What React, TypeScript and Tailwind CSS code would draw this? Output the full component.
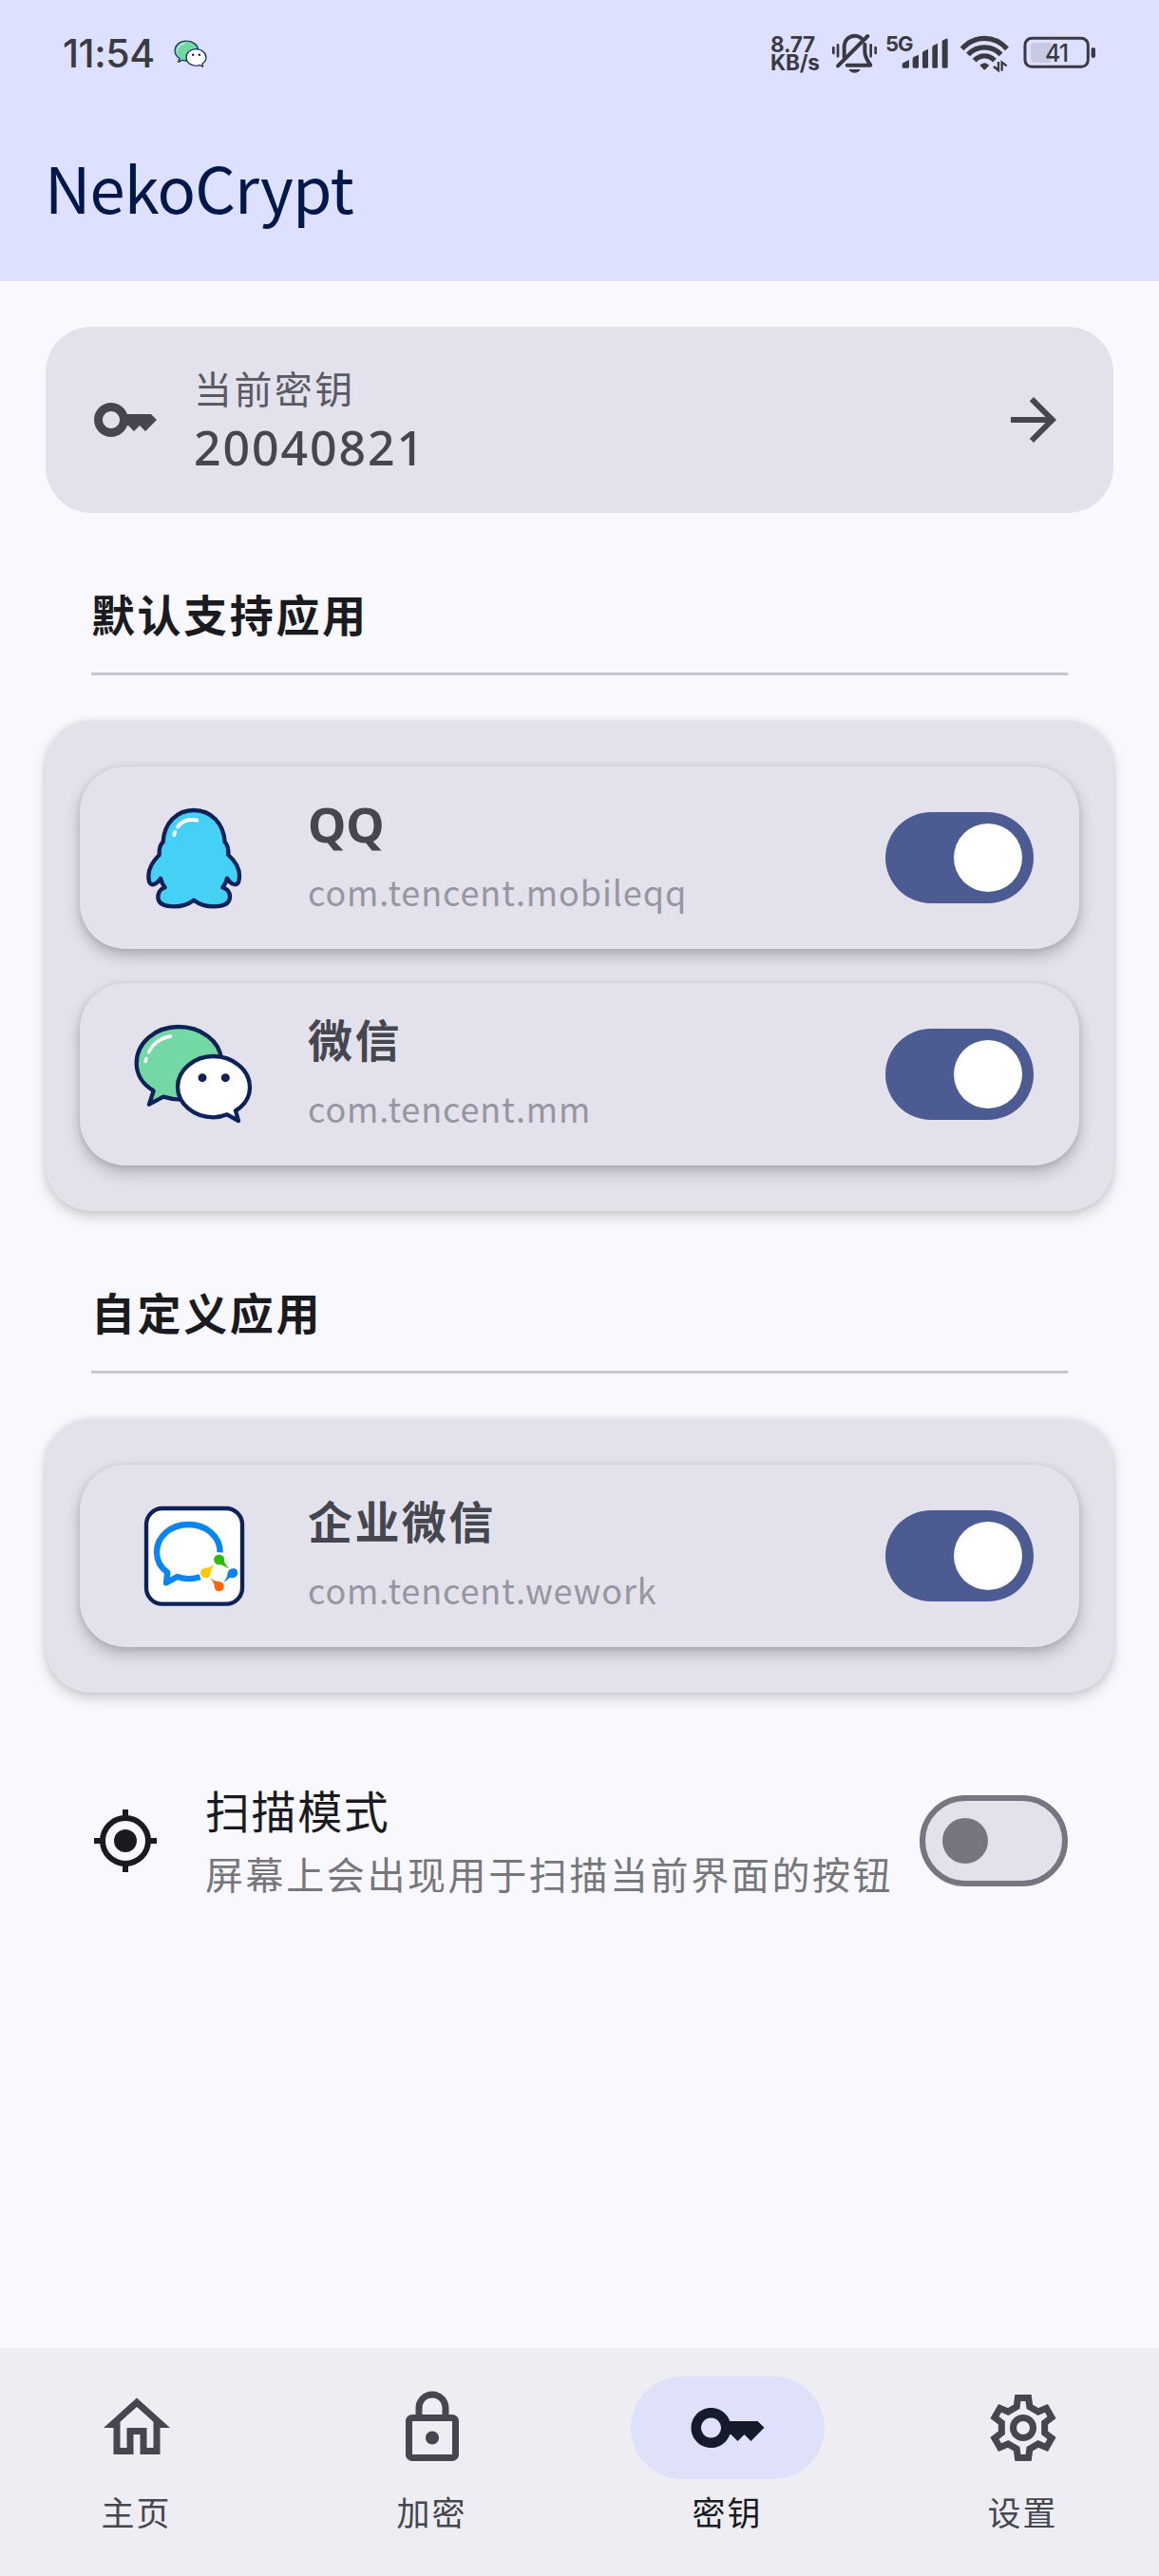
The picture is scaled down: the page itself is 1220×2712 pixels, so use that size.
import type { ReactNode } from "react";

const latin = "font-['Noto_Sans','Noto_Sans_CJK_SC',sans-serif]";
const digits = "font-['Inter','Noto_Sans_CJK_SC',sans-serif]";
const cjk = "font-['Noto_Sans_CJK_SC',sans-serif]";

const KEY_PATH =
  "M21 10h-8.35C11.83 7.67 9.61 6 7 6c-3.31 0-6 2.69-6 6s2.69 6 6 6c2.61 0 4.83-1.67 5.65-4H13l2 2 2-2 2 2 4-4.04L21 10zM7 15c-1.65 0-3-1.35-3-3s1.35-3 3-3 3 1.35 3 3-1.35 3-3 3z";
const HOME_PATH =
  "M12 5.69l5 4.5V18h-2v-6H9v6H7v-7.81l5-4.5M12 3L2 12h3v8h6v-6h2v6h6v-8h3L12 3z";
const LOCK_PATH =
  "M18 8h-1V6c0-2.76-2.24-5-5-5S7 3.24 7 6v2H6c-1.1 0-2 .9-2 2v10c0 1.1.9 2 2 2h12c1.1 0 2-.9 2-2V10c0-1.1-.9-2-2-2zM9 6c0-1.66 1.34-3 3-3s3 1.34 3 3v2H9V6zm9 14H6V10h12v10zm-6-3c1.1 0 2-.9 2-2s-.9-2-2-2-2 .9-2 2 .9 2 2 2z";

function WeChatShapes() {
  return (
    <g stroke="#0f2257" strokeWidth="13" strokeLinejoin="round" strokeLinecap="round">
      <path
        fill="#74d8a5"
        d="M95 925C60 905 41 873 41 838C41 773 101 723 174 723C243 723 304 766 309 826L309 900L180 953C160 953 145 950 126 944L81 968Z"
      />
      <path
        fill="#fff"
        d="M284 816C346 816 399 860 399 914C399 946 383 970 354 988L363 1020L327 1000C313 1006 299 1009 284 1009C222 1009 171 966 171 913C171 860 222 816 284 816Z"
      />
      <circle cx="249" cy="884" r="13.5" fill="#0f2257" stroke="none" />
      <circle cx="322" cy="884" r="13.5" fill="#0f2257" stroke="none" />
      <path fill="none" stroke="#fff" strokeWidth="10" d="M80 803C93 776 117 758 149 753M72 823L69 833" />
    </g>
  );
}

function QQIcon() {
  return (
    <svg viewBox="6 -27 432 432" className="h-36 w-36 shrink-0">
      <path
        fill="#45d0f6"
        stroke="#0f2257"
        strokeWidth="13"
        strokeLinejoin="round"
        d="M222 39C166 39 128 82 125 139C114 150 112 164 113 180C90 203 79 222 79 246C79 272 88 278 100 271C110 268 112 261 117 254C120 268 125 276 131 283C115 287 109 301 109 313C109 332 126 343 160 343C188 343 206 335 222 323C238 335 256 343 284 343C319 343 336 332 336 312C336 298 328 287 313 283C319 276 324 268 327 254C332 261 335 268 344 271C358 278 366 270 366 245C366 222 355 202 331 180C332 164 330 150 320 139C316 82 278 39 222 39Z"
      />
      <path fill="none" stroke="#fff" strokeWidth="12" strokeLinecap="round" d="M171 92C184 73 205 65 232 71M162 108L160 117" />
    </svg>
  );
}

function WeChatIcon() {
  return (
    <svg viewBox="6 657 432 432" className="h-36 w-36 shrink-0">
      <WeChatShapes />
    </svg>
  );
}

function WeComIcon() {
  return (
    <svg viewBox="-24 -27 432 432" className="h-36 w-36 shrink-0">
      <rect x="42" y="39" width="303" height="302" rx="51" fill="#fff" stroke="#0f2257" strokeWidth="13" />
      <path
        fill="none"
        stroke="#0a85ee"
        strokeWidth="19"
        strokeLinejoin="round"
        d="M275 178C276 129 232 90 175 90C119 90 75 128 75 178C75 205 87 226 109 242L105 274L140 255C160 262 188 263 212 256"
      />
      <path fill="#2fbb08" d="M258 209C251 194 261 185 272 185C285 185 291 196 288 207C292 217 301 225 303 230C294 224 285 219 276 217C268 218 262 216 258 209Z" />
      <path fill="#0a82ee" d="M320 229C332 232 333 246 327 253C322 259 313 260 307 257C299 262 291 270 285 273C291 264 297 258 298 248C299 235 308 226 320 229Z" />
      <path fill="#fd6500" d="M243 257C251 265 260 269 270 270C283 271 290 281 286 291C282 302 267 305 260 295C256 289 258 283 256 279C253 270 248 264 243 257Z" />
      <path fill="#fdcb04" d="M259 213C251 222 247 231 245 242C244 254 236 260 227 259C216 257 210 245 216 235C221 226 231 228 239 226C247 222 253 218 259 213Z" />
    </svg>
  );
}

function StatusIcons() {
  return (
    <svg viewBox="255 96 850 144" className="h-12 w-[283.3px] shrink-0" fill="none" stroke="#393a44">
      <g strokeWidth="10" strokeLinecap="round">
        <path d="M265 150V168M279 142V178M383 142V178M398 150V168" strokeWidth="8" />
        <path d="M299 180V150C299 126 314 113 332 113C341 113 349 117 354 122" strokeWidth="12" />
        <path d="M364 140V163C364 181 373 193 382 206H308" strokeLinejoin="round" strokeWidth="12" />
        <path d="M279 208L373 114" strokeWidth="12" />
      </g>
      <path d="M313 219H350C346 227 340 230 332 230S317 227 313 219Z" fill="#393a44" stroke="none" />
      <g fill="#393a44" stroke="none">
        <path d="M482 204Q482 200 486 198L504 189V211Q504 215 500 215H486Q482 215 482 211Z" />
        <path d="M515 186Q515 182 518 180L534 173V211Q534 215 530 215H519Q515 215 515 211Z" />
        <path d="M546 168Q546 164 549 162L564 155V211Q564 215 560 215H550Q546 215 546 211Z" />
        <path d="M577 150Q577 146 580 144L594 137V211Q594 215 590 215H581Q577 215 577 211Z" />
        <path d="M608 132Q608 128 611 127L622 122Q626 121 626 125V211Q626 215 622 215H612Q608 215 608 211Z" />
      </g>
      <g strokeWidth="16">
        <path d="M671 154C711 110 773 110 813 154" />
        <path d="M690 172C719 142 765 142 794 172" />
        <path d="M710 191C728 172 756 172 774 191" />
      </g>
      <path d="M727 206Q742 191 757 206L745 219Q742 222 739 219Z" fill="#393a44" stroke="none" />
      <path d="M786 195V222L771 210M797 224V197L812 208" strokeWidth="7" />
      <rect x="870" y="121" width="199" height="90" rx="21" strokeWidth="9" />
      <path d="M902 135H953V198H902Q888 198 888 184V149Q888 135 902 135Z" fill="#c7c9e5" stroke="none" />
      <rect x="1079" y="150" width="13" height="33" rx="6" fill="#393a44" stroke="none" />
    </svg>
  );
}

function StatusBar() {
  return (
    <div className="flex h-[112px] items-center pl-[66px] text-[#393a44]">
      <span className={`${digits} w-[117px] text-[41px] font-medium leading-none tracking-[-0.4px]`}>11:54</span>
      <svg viewBox="30 712 380 316" className="h-[29px] w-[35px]">
        <WeChatShapes />
      </svg>
      <div className={`${digits} ml-[593px] w-[63px] whitespace-pre-line text-[22.5px] font-bold leading-[19px] tracking-[-0.2px]`}>
        {"8.77\nKB/s"}
      </div>
      <div className="relative h-12">
        <StatusIcons />
        <span className={`${digits} absolute left-[58px] top-[3px] text-[22px] font-bold leading-[22px] tracking-[-1px]`}>5G</span>
        <span className={`${digits} absolute left-[226px] top-[12px] text-[25px] font-medium leading-[25px] tracking-[-1px]`}>41</span>
      </div>
    </div>
  );
}

function Switch({ on }: { on: boolean }) {
  return on ? (
    <div className="flex h-24 w-[156px] shrink-0 items-center justify-end rounded-full bg-[#4c5b92] pr-3">
      <div className="h-[72px] w-[72px] rounded-full bg-white" />
    </div>
  ) : (
    <div className="flex h-24 w-[156px] shrink-0 items-center rounded-full border-[6px] border-[#777680] bg-[#e3e1ec] pl-[18px]">
      <div className="h-12 w-12 rounded-full bg-[#777680]" />
    </div>
  );
}

function SectionTitle({ children }: { children: ReactNode }) {
  return (
    <div className="px-12">
      <h2 className={`${cjk} text-[46px] font-bold leading-[66px] tracking-[2.6px] text-[#1a1b21]`}>{children}</h2>
      <div className="mt-[30px] h-[3px] bg-[#c6c5d0]" />
    </div>
  );
}

function AppGroup({ children }: { children: ReactNode }) {
  return (
    <div className="mt-12 flex flex-col gap-9 rounded-[48px] bg-[#e3e1ea] px-9 py-12 shadow-[0_6px_14px_rgba(0,0,0,0.17),0_0_7px_rgba(0,0,0,0.09)]">
      {children}
    </div>
  );
}

function AppRow({ icon, name, pkg }: { icon: ReactNode; name: string; pkg: string }) {
  return (
    <div className="flex h-48 items-center rounded-[48px] bg-[#e3e1ec] px-12 shadow-[0_8px_16px_rgba(0,0,0,0.21),0_1px_7px_rgba(0,0,0,0.1)]">
      {icon}
      <div className="ml-12 flex-1 pb-1">
        <div className={`${latin} h-[74px] text-[47px] font-bold leading-[65px] tracking-[2.4px] text-[#45464f]`}>
          {name === "QQ" ? <span className="text-[51px] tracking-[0px]">{name}</span> : name}
        </div>
        <div className={`${cjk} text-[36px] leading-[59px] tracking-[0.9px] text-[#9796a0]`}>{pkg}</div>
      </div>
      <Switch on />
    </div>
  );
}

function NavItem({ label, active, children }: { label: string; active?: boolean; children: ReactNode }) {
  return (
    <div className="flex flex-1 flex-col items-center">
      <div className={active ? "flex h-[108px] w-[204px] items-center justify-center rounded-full bg-[#dfe0fa] text-[#161b2c]" : "flex h-[108px] w-[204px] items-center justify-center text-[#45464f]"}>
        <svg viewBox="0 0 24 24" className="h-[84px] w-[84px]" fill="currentColor">
          {children}
        </svg>
      </div>
      <span className={active ? `${cjk} mt-2 text-[35px] leading-[52px] tracking-[2px] text-[#1a1b21]` : `${cjk} mt-2 text-[35px] leading-[52px] tracking-[2px] text-[#45464f]`}>
        {label}
      </span>
    </div>
  );
}

export default function App() {
  return (
    <div className="flex h-[2712px] w-[1220px] flex-col overflow-hidden bg-[#faf8ff]">
      <header className="h-[296px] bg-[#dde1ff]">
        <StatusBar />
        <h1 className={`${cjk} pl-[47px] pt-[37px] text-[67px] leading-[94px] tracking-[-0.9px] text-[#001849]`}>NekoCrypt</h1>
      </header>

      <main className="flex flex-1 flex-col px-12 pt-12">
        <section className="flex h-[196px] items-center rounded-[48px] bg-[#e3e1ec] px-12 text-[#45464f]">
          <svg viewBox="0 0 24 24" className="h-[72px] w-[72px]" fill="currentColor">
            <path d={KEY_PATH} />
          </svg>
          <div className="ml-9 flex-1">
            <div className={`${cjk} h-[61px] text-[40px] leading-[58px] tracking-[2.4px] text-[#5a5a64]`}>当前密钥</div>
            <div className={`${latin} h-[66px] text-[50px] font-medium leading-[63px] tracking-[1.9px]`}>20040821</div>
          </div>
          <svg viewBox="0 0 24 24" className="h-[72px] w-[72px]" fill="currentColor">
            <path d="M12 4l-1.41 1.41L16.17 11H4v2h12.17l-5.58 5.59L12 20l8-8z" />
          </svg>
        </section>

        <div className="mt-[72px]">
          <SectionTitle>默认支持应用</SectionTitle>
          <AppGroup>
            <AppRow icon={<QQIcon />} name="QQ" pkg="com.tencent.mobileqq" />
            <AppRow icon={<WeChatIcon />} name="微信" pkg="com.tencent.mm" />
          </AppGroup>
        </div>

        <div className="mt-[72px]">
          <SectionTitle>自定义应用</SectionTitle>
          <AppGroup>
            <AppRow icon={<WeComIcon />} name="企业微信" pkg="com.tencent.wework" />
          </AppGroup>
        </div>

        <section className="mt-[60px] flex h-48 items-center px-12">
          <svg viewBox="0 0 24 24" className="h-[72px] w-[72px] shrink-0" fill="none" stroke="#1a1b21" strokeWidth="2">
            <circle cx="12" cy="12" r="8" />
            <circle cx="12" cy="12" r="4" fill="#1a1b21" stroke="none" />
            <path d="M12 1v3M12 20v3M1 12h3M20 12h3" />
          </svg>
          <div className={`${cjk} ml-12 flex-1 whitespace-nowrap`}>
            <div className="h-[68px] text-[47px] leading-[62px] tracking-[1.6px] text-[#1a1b21]">扫描模式</div>
            <div className="text-[40px] leading-[60px] tracking-[2.6px] text-[#76767d]">屏幕上会出现用于扫描当前界面的按钮</div>
          </div>
          <Switch on={false} />
        </section>
      </main>

      <nav className="flex h-60 gap-6 bg-[#eeedf4] pt-[30px]">
        <NavItem label="主页">
          <path d={HOME_PATH} />
        </NavItem>
        <NavItem label="加密">
          <path d={LOCK_PATH} />
        </NavItem>
        <NavItem label="密钥" active>
          <path d={KEY_PATH} />
        </NavItem>
        <NavItem label="设置">
          <g fill="none" stroke="currentColor" strokeWidth="2">
            <path d="M10.4 3L13.6 3L13.95 5.65L16.52 7.14L18.99 6.11L20.59 8.89L18.47 10.51L18.47 13.49L20.59 15.11L18.99 17.89L16.52 16.86L13.95 18.35L13.6 21L10.4 21L10.05 18.35L7.48 16.86L5.01 17.89L3.41 15.11L5.53 13.49L5.53 10.51L3.41 8.89L5.01 6.11L7.48 7.14L10.05 5.65Z" />
            <circle cx="12" cy="12" r="3" />
          </g>
        </NavItem>
      </nav>
    </div>
  );
}
